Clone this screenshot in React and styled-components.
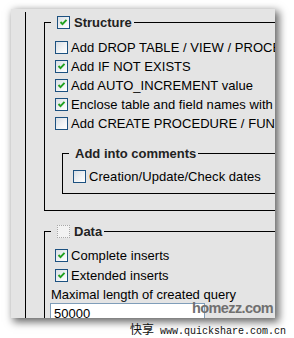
import React from "react";
import styled, { createGlobalStyle, css } from "styled-components";

const GlobalStyle = createGlobalStyle`
  html, body {
    margin: 0;
    padding: 0;
    background: #ffffff;
  }
  body {
    font-family: "Liberation Sans", Arial, sans-serif;
    font-size: 13px;
    color: #000;
  }
`;

const structureOptions = [
  { label: "Add DROP TABLE / VIEW / PROCEDURE / FUNCTION", checked: false },
  { label: "Add IF NOT EXISTS", checked: true },
  { label: "Add AUTO_INCREMENT value", checked: true },
  { label: "Enclose table and field names with backquotes", checked: true },
  { label: "Add CREATE PROCEDURE / FUNCTION", checked: false },
];

const dataOptions = [
  { label: "Complete inserts", checked: true },
  { label: "Extended inserts", checked: true },
];

const CheckBox = ({ checked, disabled }) => (
  <Box $disabled={disabled}>
    {checked && (
      <svg width="11" height="11" viewBox="0 0 11 11">
        <polyline
          points="2.5,5 4.5,7.2 8.5,2.8"
          fill="none"
          stroke="#21a121"
          strokeWidth="1.9"
        />
      </svg>
    )}
  </Box>
);

const App = () => {
  return (
    <>
      <GlobalStyle />
      <Page>
        <Window>
          <Outer>
            <Fieldset>
              <Legend>
                <CheckBox checked />
                <LegendText>Structure</LegendText>
              </Legend>
              <Rows>
                {structureOptions.map((o) => (
                  <Row key={o.label}>
                    <CheckBox checked={o.checked} />
                    <RowText>{o.label}</RowText>
                  </Row>
                ))}
              </Rows>
              <InnerFieldset>
                <Legend>
                  <LegendText>Add into comments</LegendText>
                </Legend>
                <Rows $inner>
                  <Row>
                    <CheckBox />
                    <RowText>Creation/Update/Check dates</RowText>
                  </Row>
                </Rows>
              </InnerFieldset>
            </Fieldset>

            <DataFieldset>
              <Legend>
                <CheckBox disabled />
                <LegendText>Data</LegendText>
              </Legend>
              <Rows $inner>
                {dataOptions.map((o) => (
                  <Row key={o.label} $tall>
                    <CheckBox checked={o.checked} />
                    <RowText>{o.label}</RowText>
                  </Row>
                ))}
              </Rows>
              <FieldLabel>Maximal length of created query</FieldLabel>
              <TextInput type="text" defaultValue="50000" />
            </DataFieldset>
          </Outer>
          <Watermark>homezz.com</Watermark>
        </Window>
        <Caption>
          <Cjk>快享</Cjk> www.quickshare.com.cn
        </Caption>
      </Page>
    </>
  );
};

const Page = styled.div`
  padding: 9px 0 0 11px;
  width: 294px;
  height: 338px;
  box-sizing: border-box;
  overflow: hidden;
`;

const Window = styled.div`
  position: relative;
  width: 264px;
  height: 309px;
  background: #e4e4e4;
  overflow: hidden;
  box-shadow: 3px 3px 8px 1px rgba(0, 0, 0, 0.6);
`;

const Outer = styled.div`
  margin: 3px 0 0 14px;
  padding: 2px 0 0 18px;
  height: 100%;
  border-left: 1px solid #000;
`;

const Fieldset = styled.fieldset`
  width: 290px;
  margin: 0;
  padding: 0 0 16px 6px;
  border: 1px solid #000;
  min-width: 0;
`;

const InnerFieldset = styled(Fieldset)`
  width: 280px;
  margin: 12px 0 0 11px;
  padding-bottom: 7px;
`;

const DataFieldset = styled(Fieldset)`
  margin-top: 12px;
  padding-bottom: 40px;
`;

const Legend = styled.legend`
  display: flex;
  align-items: center;
  height: 16px;
  padding: 0 2px;
  margin: 0;
`;

const LegendText = styled.span`
  font-weight: bold;
  font-size: 13px;
  color: #222;
  margin-left: 4px;
`;

const Rows = styled.div`
  padding-top: ${(p) => (p.$inner ? 6 : 8)}px;
`;

const Row = styled.div`
  display: flex;
  align-items: center;
  height: ${(p) => (p.$tall ? 20 : 19)}px;
  padding-left: 4px;
  white-space: nowrap;
`;

const RowText = styled.span`
  margin-left: 3px;
  letter-spacing: 0.05px;
`;

const Box = styled.span`
  flex: none;
  box-sizing: border-box;
  display: inline-flex;
  align-items: center;
  justify-content: center;
  width: 13px;
  height: 13px;
  margin-left: 0;
  border: 1px solid #1c5180;
  background: linear-gradient(135deg, #d8dee4 0%, #f2f4f6 60%, #ffffff 100%);
  ${(p) =>
    p.$disabled &&
    css`
      border: 1px dotted #a8a8a8;
      background: #f2f2f2;
    `}
  ${Legend} & {
    margin-left: 4px;
  }
`;

const FieldLabel = styled.div`
  height: 19px;
  line-height: 19px;
  white-space: nowrap;
`;

const TextInput = styled.input`
  display: block;
  box-sizing: border-box;
  width: 155px;
  height: 20px;
  margin: -1px 0 0 -1px;
  padding: 0 3px;
  border: 1px solid #7f9db9;
  background: #fff;
  font-family: "Liberation Sans", Arial, sans-serif;
  font-size: 13px;
  color: #000;
  outline: none;
`;

const Watermark = styled.div`
  position: absolute;
  right: 2px;
  bottom: 2px;
  font-family: "Liberation Sans", Arial, sans-serif;
  font-weight: bold;
  font-size: 14.5px;
  letter-spacing: -0.6px;
  line-height: 15px;
  color: #707070;
`;

const Caption = styled.div`
  margin: 5px 0 0 119px;
  font-family: "Liberation Mono", "Noto Sans CJK SC", monospace;
  font-size: 10px;
  line-height: 12px;
  white-space: nowrap;
  color: #111;
`;

const Cjk = styled.span`
  font-family: "Noto Sans CJK SC", sans-serif;
  font-size: 12px;
`;

export default App;
